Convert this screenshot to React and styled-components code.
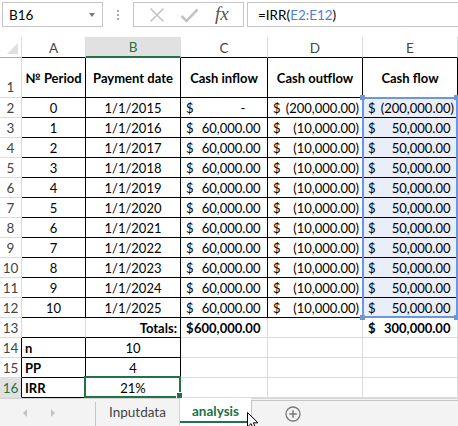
import React from 'react';
import styled, { createGlobalStyle } from 'styled-components';

const GlobalStyle = createGlobalStyle`
  html, body {
    margin: 0;
    padding: 0;
    background: #fff;
  }
  body {
    width: 458px;
    height: 426px;
    overflow: hidden;
    font-family: Lato, "Noto Sans", sans-serif;
    font-size: 13px;
    color: #000;
  }
`;

const GREEN = '#217346';
const GRID = '#dadcdd';
const RANGE = '#6c96de';

// which cells carry the thin black table border
const boxed = (r, c) => (r >= 1 && r <= 12) || (r >= 14 && r <= 16 && c <= 1);
const rightBlack = (r, c) => boxed(r, c) || (c < 4 && boxed(r, c + 1)) || (r === 13 && c === 1);
const bottomBlack = (r, c) => boxed(r, c) || boxed(r + 1, c);

const rows = [
  {
    n: 1,
    cells: [
      { t: '№ Period', bold: true, align: 'center' },
      { t: 'Payment date', bold: true, align: 'center' },
      { t: 'Cash inflow', bold: true, align: 'center' },
      { t: 'Cash outflow', bold: true, align: 'center' },
      { t: 'Cash flow', bold: true, align: 'center' },
    ],
  },
];

for (let i = 0; i <= 10; i++) {
  rows.push({
    n: i + 2,
    cells: [
      { t: String(i), align: 'center' },
      { t: `1/1/${2015 + i}`, align: 'center' },
      i === 0 ? { acct: '-', dash: true } : { acct: '60,000.00' },
      { acct: i === 0 ? '200,000.00' : '10,000.00', neg: true },
      i === 0 ? { acct: '200,000.00', neg: true } : { acct: '50,000.00' },
    ],
  });
}

rows.push({
  n: 13,
  cells: [
    {},
    { t: 'Totals:', bold: true, align: 'flex-end' },
    { acct: '600,000.00', bold: true, tight: true },
    {},
    { acct: '300,000.00', bold: true },
  ],
});
rows.push({ n: 14, cells: [{ t: 'n', bold: true, align: 'flex-start' }, { t: '10', align: 'center' }, {}, {}, {}] });
rows.push({ n: 15, cells: [{ t: 'PP', bold: true, align: 'flex-start' }, { t: '4', align: 'center' }, {}, {}, {}] });
rows.push({ n: 16, cells: [{ t: 'IRR', bold: true, align: 'flex-start' }, { t: '21%', align: 'center' }, {}, {}, {}] });

const App = () => {
  return (
    <>
      <GlobalStyle />
      <Window>
        <FormulaBar>
          <NameBox>
            <span>B16</span>
            <Caret />
          </NameBox>
          <Grip>
            <i />
            <i />
            <i />
          </Grip>
          <FxBox>
            <svg width="16" height="16" viewBox="0 0 16 16">
              <path d="M1.5 1.5 L14.5 14.5 M14.5 1.5 L1.5 14.5" stroke="#c4c4c4" strokeWidth="1.6" fill="none" />
            </svg>
            <svg width="19" height="15" viewBox="0 0 19 15">
              <path d="M1.5 8 L6.5 13 L17.5 1.5" stroke="#c4c4c4" strokeWidth="2.6" fill="none" />
            </svg>
            <Fx>fx</Fx>
          </FxBox>
          <FormulaInput>
            =IRR(<RangeRef>E2:E12</RangeRef>)
          </FormulaInput>
        </FormulaBar>

        <Sheet>
          <Corner>
            <Triangle />
          </Corner>
          {['A', 'B', 'C', 'D', 'E'].map((l, i) => (
            <ColHead key={l} $col={i + 2} $active={l === 'B'}>
              {l}
            </ColHead>
          ))}

          {rows.map((row) => (
            <React.Fragment key={row.n}>
              <RowHead $row={row.n + 1} $tall={row.n === 1} $edge={row.n >= 14} $active={row.n === 16}>
                {row.n}
              </RowHead>
              {row.cells.map((cell, c) => (
                <Cell
                  key={c}
                  $row={row.n + 1}
                  $col={c + 2}
                  $rb={rightBlack(row.n, c)}
                  $bb={bottomBlack(row.n, c)}
                  $fill={c === 4 && row.n >= 2 && row.n <= 12 ? '#e9eef9' : '#fff'}
                  $align={cell.align || 'flex-start'}
                  $bold={cell.bold}
                  $acct={!!cell.acct}
                >
                  {cell.acct ? (
                    <>
                      <span>$</span>
                      <span>
                        {cell.neg ? `(${cell.acct})` : cell.acct}
                        {!cell.neg && <Hidden>{cell.dash ? '00)' : ')'}</Hidden>}
                      </span>
                    </>
                  ) : (
                    cell.t
                  )}
                </Cell>
              ))}
            </React.Fragment>
          ))}

          <RangeBox>
            <Handle $top $left />
            <Handle $top />
            <Handle $left />
            <Handle />
          </RangeBox>
          <ActiveCell>
            <FillHandle />
          </ActiveCell>
        </Sheet>

        <TabBar>
          <Nav>
            <Arrow $dir="left" />
            <Arrow $dir="right" />
          </Nav>
          <Tab>Inputdata</Tab>
          <Tab $active>analysis</Tab>
          <TabRest>
            <svg width="16" height="16" viewBox="0 0 16 16">
              <circle cx="8" cy="8" r="7" stroke="#7a7a7a" strokeWidth="1.3" fill="none" />
              <path d="M8 4.2 V11.8 M4.2 8 H11.8" stroke="#7a7a7a" strokeWidth="1.5" />
            </svg>
          </TabRest>
          <Pointer width="13" height="18" viewBox="0 0 13 18">
            <path d="M0.5 0.5 L0.5 15 L4 11.6 L6.6 17 L8.8 16 L6.3 10.8 L11 10.8 Z" fill="#fff" stroke="#000" strokeWidth="1" />
          </Pointer>
        </TabBar>
      </Window>
    </>
  );
};

const Window = styled.div`
  width: 458px;
  height: 426px;
  display: flex;
  flex-direction: column;
  overflow: hidden;
  background: #fff;
`;

const FormulaBar = styled.div`
  height: 37px;
  flex: none;
  box-sizing: border-box;
  padding: 2px 0 0 2px;
  display: flex;
  align-items: flex-start;
`;

const NameBox = styled.div`
  width: 101px;
  height: 25px;
  box-sizing: border-box;
  border: 1px solid #c6c6c6;
  display: flex;
  align-items: center;
  justify-content: space-between;
  padding: 0 7px 0 6px;
  font-size: 13.5px;
`;

const Caret = styled.div`
  width: 0;
  height: 0;
  border-left: 3.5px solid transparent;
  border-right: 3.5px solid transparent;
  border-top: 4px solid #777;
`;

const Grip = styled.div`
  width: 3px;
  height: 25px;
  margin-left: 14px;
  display: flex;
  flex-direction: column;
  justify-content: center;
  gap: 2px;

  i {
    display: block;
    width: 2px;
    height: 2px;
    background: #a8a8a8;
  }
`;

const FxBox = styled.div`
  width: 111px;
  height: 25px;
  margin-left: 13px;
  box-sizing: border-box;
  border: 1px solid #c6c6c6;
  display: flex;
  align-items: center;
  padding: 0 0 0 15px;
  gap: 15px;

  svg:nth-child(2) {
    margin-top: 2px;
  }
`;

const Fx = styled.span`
  font-family: "Liberation Serif", "DejaVu Serif", serif;
  font-style: italic;
  font-size: 19px;
  color: #555;
  margin-left: 1px;
  margin-top: -2px;
`;

const FormulaInput = styled.div`
  flex: 1;
  height: 25px;
  margin-left: 3px;
  box-sizing: border-box;
  border: 1px solid #c6c6c6;
  border-right: none;
  display: flex;
  align-items: center;
  padding-left: 10px;
  font-size: 13.5px;
`;

const RangeRef = styled.span`
  color: #4f80d6;
`;

const Sheet = styled.div`
  flex: none;
  display: grid;
  grid-template-columns: 22px 64px 95px 87px 95px 95px;
  grid-template-rows: 21px 40px repeat(15, 20px);
`;

const Corner = styled.div`
  grid-row: 1;
  grid-column: 1;
  box-sizing: border-box;
  border-right: 1px solid ${GRID};
  border-bottom: 1px solid #ababab;
  display: flex;
  align-items: flex-end;
  justify-content: flex-end;
  padding: 0 3px 3px 0;
`;

const Triangle = styled.div`
  width: 0;
  height: 0;
  border-left: 11px solid transparent;
  border-bottom: 11px solid #dfdfdf;
`;

const ColHead = styled.div`
  grid-row: 1;
  grid-column: ${(p) => p.$col};
  box-sizing: border-box;
  display: flex;
  align-items: center;
  justify-content: center;
  border-right: 1px solid ${GRID};
  border-bottom: ${(p) => (p.$active ? `2px solid ${GREEN}` : '1px solid #000')};
  background: ${(p) => (p.$active ? '#e1e1e1' : '#fff')};
  color: ${(p) => (p.$active ? GREEN : '#444')};
  font-size: 13.5px;
  padding-top: 1px;
`;

const RowHead = styled.div`
  grid-row: ${(p) => p.$row};
  grid-column: 1;
  box-sizing: border-box;
  display: flex;
  justify-content: center;
  align-items: ${(p) => (p.$tall ? 'flex-end' : 'center')};
  padding-bottom: ${(p) => (p.$tall ? '2px' : '0')};
  border-bottom: 1px solid ${GRID};
  border-right: 1px solid ${(p) => (p.$edge ? '#000' : GRID)};
  background: ${(p) => (p.$active ? '#e1e1e1' : '#fff')};
  color: ${(p) => (p.$active ? GREEN : '#444')};
  font-size: 13.5px;
`;

const Cell = styled.div`
  grid-row: ${(p) => p.$row};
  grid-column: ${(p) => p.$col};
  box-sizing: border-box;
  display: flex;
  align-items: center;
  justify-content: ${(p) => (p.$acct ? 'space-between' : p.$align)};
  padding: ${(p) => (p.$acct ? '0 3px 0 5px' : '0 3px')};
  border-right: 1px solid ${(p) => (p.$rb ? '#000' : GRID)};
  border-bottom: 1px solid ${(p) => (p.$bb ? '#000' : GRID)};
  background: ${(p) => p.$fill};
  font-weight: ${(p) => (p.$bold ? 700 : 400)};
  white-space: nowrap;
  overflow: hidden;
`;

const Hidden = styled.span`
  visibility: hidden;
`;

const RangeBox = styled.div`
  grid-column: 6;
  grid-row: 3 / 14;
  margin: -1px 0 0 -1px;
  border: 2px solid ${RANGE};
  position: relative;
  pointer-events: none;
`;

const Handle = styled.div`
  position: absolute;
  width: 5px;
  height: 5px;
  background: ${RANGE};
  ${(p) => (p.$top ? 'top: -4px;' : 'bottom: -4px;')}
  ${(p) => (p.$left ? 'left: -4px;' : 'right: -3px;')}
`;

const ActiveCell = styled.div`
  grid-column: 3;
  grid-row: 17;
  margin: -2px 0 0 -2px;
  border: 2px solid ${GREEN};
  position: relative;
  pointer-events: none;
`;

const FillHandle = styled.div`
  position: absolute;
  right: -4px;
  bottom: -3px;
  width: 5px;
  height: 5px;
  background: ${GREEN};
  border: 1px solid #fff;
`;

const TabBar = styled.div`
  position: relative;
  flex: 1;
  display: flex;
  background: #f3f3f3;
  border-top: 1px solid #d4d4d4;
`;

const Nav = styled.div`
  width: 96px;
  box-sizing: border-box;
  display: flex;
  align-items: center;
  gap: 24px;
  padding-left: 23px;
  border-right: 1px solid #c6c6c6;
  margin-top: 3px;
`;

const Arrow = styled.div`
  width: 0;
  height: 0;
  border-top: 4px solid transparent;
  border-bottom: 4px solid transparent;
  ${(p) => (p.$dir === 'left' ? 'border-right: 4px solid #c3c3c3;' : 'border-left: 4px solid #c3c3c3;')}
  margin-top: -3px;
`;

const Tab = styled.div`
  width: ${(p) => (p.$active ? '72px' : '83px')};
  box-sizing: border-box;
  display: flex;
  align-items: center;
  justify-content: center;
  font-size: 13.5px;
  font-weight: ${(p) => (p.$active ? 700 : 400)};
  color: ${(p) => (p.$active ? GREEN : '#444')};
  background: ${(p) => (p.$active ? '#fff' : 'transparent')};
  margin-top: ${(p) => (p.$active ? '-1px' : '0')};
  border-left: ${(p) => (p.$active ? '1px solid #d4d4d4' : 'none')};
  box-shadow: ${(p) => (p.$active ? `inset 0 -3px 0 #fff, inset 0 -5px 0 ${GREEN}` : 'none')};
  padding-bottom: 2px;
`;

const TabRest = styled.div`
  flex: 1;
  margin-top: 1px;
  border-top: 1px solid #c6c6c6;
  border-left: 1px solid #c6c6c6;
  display: flex;
  align-items: center;
  padding-left: 33px;
`;

const Pointer = styled.svg`
  position: absolute;
  left: 247px;
  top: 13px;
`;

export default App;
